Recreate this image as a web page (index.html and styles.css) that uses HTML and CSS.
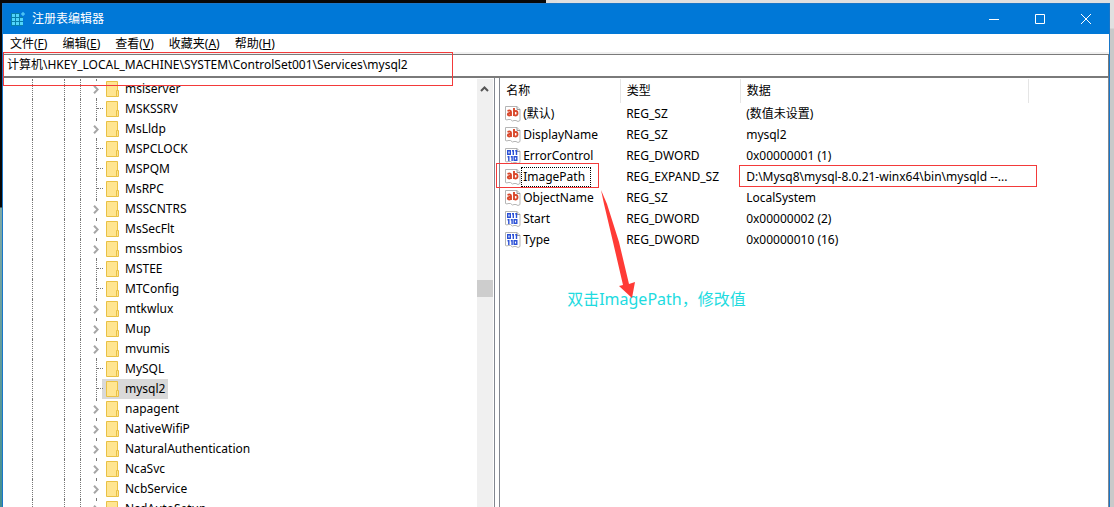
FILE: index.html
```html
<!DOCTYPE html>
<html lang="zh-CN">
<head>
<meta charset="utf-8">
<title>注册表编辑器</title>
<link rel="stylesheet" href="styles.css">
</head>
<body>
<svg class="sprite" aria-hidden="true">
  <symbol id="folder" viewBox="0 0 14 16">
    <path d="M.5.5h11v15H.5z" fill="#ffe591" stroke="#e9c145"/>
    <path d="M10.500 9.500h2v6h-2z" fill="#ffe591" stroke="#e9c145"/>
  </symbol>
  <symbol id="page" viewBox="0 0 16 16">
    <path d="M.5.5h11.500l3 3v11l-2 1-2-1-2 0-1.500 .5-2-1.500H3l-1 .500-1.500-.5z" fill="#fff" stroke="#b5b5b5"/>
    <path d="M12 .5v3h3" fill="#eee" stroke="#999"/>
  </symbol>
  <symbol id="string" viewBox="0 0 16 16">
    <use href="#page"/>
    <g fill="none" stroke="#d9482b" stroke-width="1.900"><path d="M2.500 4.900q3.500-1 3.500 1V10M5.500 7H4.500q-1.700.2-1.700 1.300t1.300 1.200q1.600 0 1.900-1.200M9 2v8M9 5.500q3.500-1.500 3.500 1.700T9 9.200"/></g>
  </symbol>
  <symbol id="binary" viewBox="0 0 16 16">
    <use href="#page"/>
    <g fill="none" stroke="#2b50d6" stroke-width="1.400"><path d="M2.700 2.700h2.600v3.600H2.700zM7 2.700h1.300V7M10.200 2.700h1.300V7M2.500 8.700h1.300V13M5.800 8.700h1.300V13M9.200 8.700h2.600v3.600H9.200z"/></g>
  </symbol>
  <symbol id="chevron" viewBox="0 0 6 9"><path d="M1 .8 4.700 4.500 1 8.200" fill="none" stroke="#a6a6a6" stroke-width="2"/></symbol>
</svg>
<div class="desktop">
  <div class="backdrop"><span class="backdrop-dark"></span><span class="backdrop-light"></span></div>
  <main class="window">
    <header class="titlebar">
      <svg class="logo" viewBox="0 0 15 15" aria-hidden="true">
        <path d="M0 1h9v4h3v9H0z" fill="#087fa9"/>
        <path d="M1 2h3v3H1zM5 2h3v3H5zM1 6h3v3H1zM5 6h3v3H5zM9 6h3v3H9zM1 10h3v3H1zM5 10h3v3H5zM9 10h3v3H9z" fill="#51d5fa"/>
        <path d="M12 0v4M10 2h4" stroke="#65dcff" fill="none"/>
      </svg>
      <h1 class="title">注册表编辑器</h1>
      <div class="controls">
        <button class="control" aria-label="最小化"><svg viewBox="0 0 10 10"><path d="M0 5.500h10"/></svg></button>
        <button class="control" aria-label="最大化"><svg viewBox="0 0 10 10"><path d="M.5.5h9v9h-9z"/></svg></button>
        <button class="control" aria-label="关闭"><svg viewBox="0 0 10 10"><path d="M0 0l10 10M10 0L0 10"/></svg></button>
      </div>
    </header>
    <nav class="menu">
      <button class="menu-item">文件(<u>F</u>)</button>
      <button class="menu-item">编辑(<u>E</u>)</button>
      <button class="menu-item">查看(<u>V</u>)</button>
      <button class="menu-item">收藏夹(<u>A</u>)</button>
      <button class="menu-item">帮助(<u>H</u>)</button>
    </nav>
    <div class="address">
      <input class="address-input" aria-label="地址" value="计算机\HKEY_LOCAL_MACHINE\SYSTEM\ControlSet001\Services\mysql2">
      <span class="mark address-mark"></span>
    </div>
    <div class="panes">
      <section class="tree-pane">
        <ul class="tree" id="tree"></ul>
        <div class="scrollbar">
          <svg class="scroll-up" viewBox="0 0 9 6"><path d="M1 5l3.500-3.500L8 5" fill="none" stroke="#555" stroke-width="2"/></svg>
          <span class="thumb"></span>
        </div>
      </section>
      <section class="value-pane">
        <table class="values">
          <colgroup><col class="col-name"><col class="col-type"><col class="col-data"><col></colgroup>
          <thead><tr><th>名称</th><th>类型</th><th>数据</th><td></td></tr></thead>
          <tbody>
            <tr><td><span class="name"><svg><use href="#string"/></svg><span>(默认)</span></span></td><td>REG_SZ</td><td>(数值未设置)</td></tr>
            <tr><td><span class="name"><svg><use href="#string"/></svg><span>DisplayName</span></span></td><td>REG_SZ</td><td>mysql2</td></tr>
            <tr><td><span class="name"><svg><use href="#binary"/></svg><span>ErrorControl</span></span></td><td>REG_DWORD</td><td>0x00000001 (1)</td></tr>
            <tr><td class="marked"><span class="name"><svg><use href="#string"/></svg><span class="focused">ImagePath</span></span><span class="mark name-mark"></span></td><td>REG_EXPAND_SZ</td><td class="marked">D:\Mysq8\mysql-8.0.21-winx64\bin\mysqld --...<span class="mark data-mark"></span></td></tr>
            <tr><td><span class="name"><svg><use href="#string"/></svg><span>ObjectName</span></span></td><td>REG_SZ</td><td>LocalSystem</td></tr>
            <tr><td><span class="name"><svg><use href="#binary"/></svg><span>Start</span></span></td><td>REG_DWORD</td><td>0x00000002 (2)</td></tr>
            <tr><td><span class="name"><svg><use href="#binary"/></svg><span>Type</span></span></td><td>REG_DWORD</td><td>0x00000010 (16)</td></tr>
          </tbody>
        </table>
        <p class="note">双击ImagePath，修改值</p>
        <svg class="arrow" viewBox="0 0 36 110" aria-hidden="true"><path d="M0 0 6 14 18 52 28 94 34 92 31 108 18 96 22 95 12 52 3 14z" fill="#ff3b36"/></svg>
      </section>
    </div>
  </main>
</div>
<script src="tree.js"></script>
</body>
</html>
```
FILE: styles.css
```css
* { box-sizing: border-box; }
body { margin: 0; overflow: hidden; color: #000; font: 12px/20px "Noto Sans", "Noto Sans CJK SC", sans-serif; }
button, input { font: inherit; color: inherit; border: 0; padding: 0; background: none; }
.sprite { position: absolute; width: 0; height: 0; }
.desktop { position: relative; height: 100vh; padding: 3px 4px 0 2px; background: linear-gradient(#e0e0e0 0 28px, #c9c9c9 29px); }
.backdrop { position: absolute; inset: 0 50% 0 0; display: flex; background: #dedede; }
.backdrop-dark { width: 98%; background: linear-gradient(#080808 0 207px, #7fa9a5 208px, #438f91 100%); }
.backdrop-light { flex: 1; }
.window { position: relative; display: flex; flex-direction: column; height: 100%; background: #fff; border: 1px solid #1976c8; border-bottom: 0; }
.titlebar { display: flex; align-items: center; height: 30px; background: #0078d7; color: #fff; padding-left: 8px; flex: none; }
.logo { width: 15px; height: 15px; }
.title { flex: 1; margin: 0 0 0 6px; font-size: 12px; font-weight: 400; }
.controls { display: flex; }
.control { display: grid; place-items: center; width: 46px; height: 30px; }
.control svg { width: 10px; height: 10px; fill: none; stroke: #fff; stroke-width: 1; overflow: visible; }
.menu { display: flex; gap: 15px; height: 20px; padding-left: 7px; border-bottom: 2px solid #f0f0f0; flex: none; }
.menu-item { line-height: 20px; }
.address { position: relative; height: 24px; border: 1px solid #7a7a7a; border-left-color: #828790; border-bottom-width: 2px; flex: none; }
.address-input { display: block; width: 100%; height: 20px; padding: 0 3px; outline: 0; font-size: 12px; }
.mark { position: absolute; z-index: 2; border: 1px solid #f33a3a; pointer-events: none; }
.address-mark { left: -1px; top: -3px; width: 450px; height: 34px; }
.panes { display: flex; flex: 1; min-height: 0; }
.tree-pane { display: flex; flex: 0 0 44.5%; border-right: 1px solid #828790; padding-top: 1px; overflow: hidden; }
.tree { flex: 1; margin: 0; padding: 0; list-style: none; }
.node { display: grid; grid-template-columns: 30px 32px 16px 9px 12px auto 1fr; height: 20px; align-items: center; }
.guide { align-self: stretch; border-right: 1px dotted #777; }
.branch { position: relative; align-self: stretch; display: grid; place-items: center; }
.branch-line { position: absolute; inset: 0 auto 0 6px; border-left: 1px dotted #777; }
.leaf .branch::after { content: ""; position: absolute; left: 7px; width: 6px; top: 9px; border-top: 1px dotted #777; }
.branch svg { position: relative; width: 6px; height: 9px; box-shadow: 0 0 0 3px #fff; background: #fff; }
.key { grid-column: 6; display: flex; align-items: center; gap: 5px; height: 20px; padding: 0 3px 0 4px; }
.key svg { width: 14px; height: 16px; }
.key span { line-height: 18px; }
.selected .key { background: #d9d9d9; }
.scrollbar { position: relative; width: 17px; background: #f0f0f0; border-right: 1px solid #fff; }
.scroll-up { display: block; width: 9px; height: 6px; margin: 7px 3px; }
.thumb { position: absolute; left: 0; right: 0; top: 201px; height: 17px; background: #cdcdcd; }
.value-pane { position: relative; flex: 1; margin-left: 4px; border-left: 1px solid #828790; border-right: 1px solid #828790; padding-top: 1px; min-width: 0; }
.values { width: 100%; border-collapse: collapse; table-layout: fixed; }
.col-name { width: 120px; } .col-type { width: 120px; } .col-data { width: 288px; }
.values th { height: 24px; padding: 0 6px; text-align: left; font-weight: 400; border-right: 1px solid #e5e5e5; }
.values td { height: 21px; padding: 0 0 0 6px; white-space: nowrap; line-height: 20px; }
.values td:first-child { padding-left: 5px; }
.name { display: flex; align-items: center; }
.name svg { width: 16px; height: 16px; }
.name > span { padding: 0 1px; border: 1px solid transparent; line-height: 18px; }
.name > .focused { border: 1px dotted #000; padding-right: 5px; }
.values .marked { position: relative; }
.name-mark { left: -4px; top: -3px; width: 103px; height: 25px; }
.data-mark { left: -1px; top: -1px; width: 298px; height: 22px; }
.note { position: absolute; left: 67px; top: 209px; margin: 0; color: #1edbdf; font-size: 16px; line-height: 24px; }
.arrow { position: absolute; left: 101px; top: 112px; width: 36px; height: 110px; }
```
FILE: tree.js
```js
const keys = [
  ["msiserver", 1], ["MSKSSRV", 0], ["MsLldp", 1], ["MSPCLOCK", 0], ["MSPQM", 0],
  ["MsRPC", 0], ["MSSCNTRS", 1], ["MsSecFlt", 1], ["mssmbios", 1], ["MSTEE", 0],
  ["MTConfig", 0], ["mtkwlux", 1], ["Mup", 1], ["mvumis", 1], ["MySQL", 0],
  ["mysql2", 0], ["napagent", 1], ["NativeWifiP", 1], ["NaturalAuthentication", 1],
  ["NcaSvc", 1], ["NcbService", 1], ["NcdAutoSetup", 1]
];
document.getElementById("tree").innerHTML = keys.map(([name, open]) => `
  <li class="node${open ? "" : " leaf"}${name === "mysql2" ? " selected" : ""}">
    <span class="guide"></span><span class="guide"></span><span class="guide"></span>
    <span></span>
    <span class="branch"><span class="branch-line"></span>${open ? '<svg><use href="#chevron"/></svg>' : ""}</span>
    <span class="key"><svg><use href="#folder"/></svg><span>${name}</span></span>
  </li>`).join("");
```
